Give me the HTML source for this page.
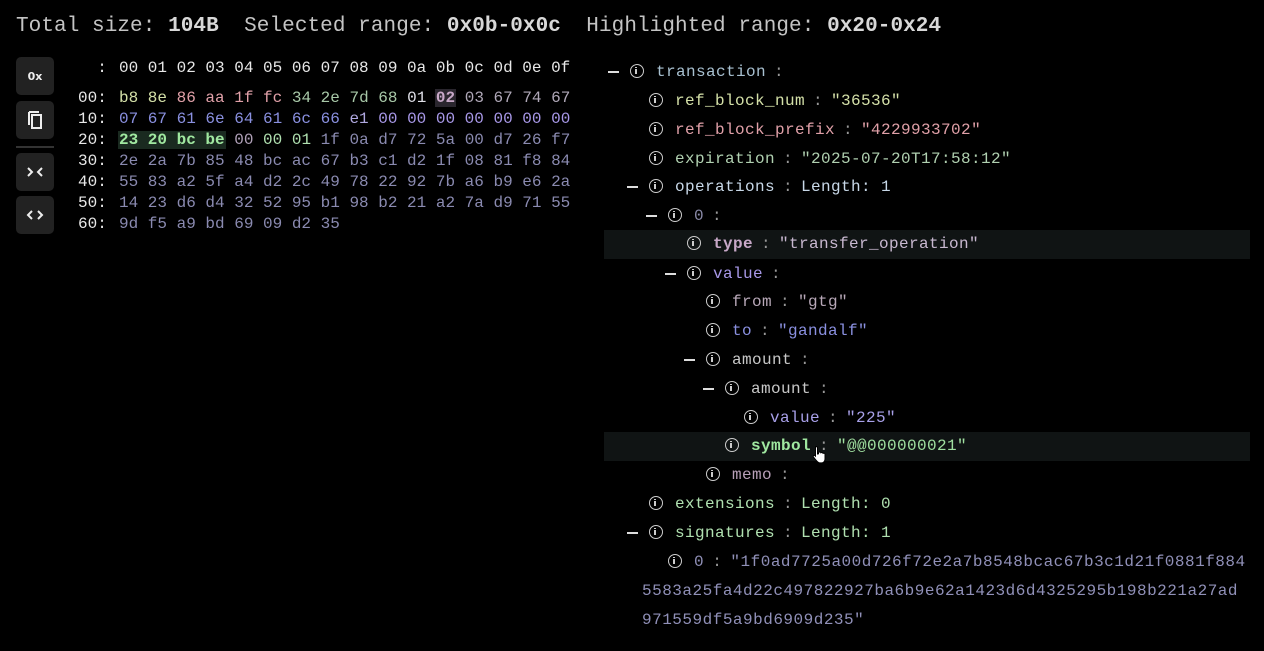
<!DOCTYPE html>
<html><head><meta charset="utf-8"><style>
body{margin:0;background:#000;width:1264px;height:651px;overflow:hidden;font-family:"Liberation Mono",monospace;position:relative}
.hdr{position:absolute;left:16px;top:15px;font-size:21px;letter-spacing:0.07px;color:#c4c4c4;white-space:pre}
.hdr b{color:#d8d8d8}
.btn{position:absolute;left:16px;width:38px;height:38px;background:#222;border-radius:5px;color:#eee;display:flex;align-items:center;justify-content:center}
.sep{position:absolute;left:16px;width:38px;top:146px;height:2px;background:#333}
.hex{position:absolute;left:78px;font-size:16px;white-space:pre;color:#e8e8e8;line-height:21px}
.hex .p{display:inline-block;width:41px;font-style:normal}
.hex span{padding:0 1px;margin:0 -1px}
.row{position:absolute;font-size:16px;letter-spacing:0.4px;white-space:pre;height:29px;line-height:29px;margin-top:1px}
.hl{position:absolute;left:604px;width:646px;height:29px;background:#101414}
.i{display:inline-block;width:14px;height:14px;border:1.6px solid #ccc;border-radius:50%;box-sizing:border-box;vertical-align:-2px;position:relative;margin-right:12px}
.i:after{content:"";position:absolute;left:4.2px;top:4px;width:2px;height:5px;background:#ccc}
.i:before{content:"";position:absolute;left:4.2px;top:1.5px;width:2px;height:1.6px;background:#ccc}
.m{position:absolute;width:11px;height:2px;background:#ddd}
.c{color:#999;margin:0 -2px}
.sig{color:#9090b8;letter-spacing:0.5px}
</style></head><body>
<div class="hdr">Total size: <b>104B</b>  Selected range: <b>0x0b-0x0c</b>  Highlighted range: <b>0x20-0x24</b></div>

<div class="btn" style="top:57px;font-size:11px;font-weight:bold;font-family:'DejaVu Sans',sans-serif">0x</div>
<div class="btn" style="top:101px"><svg width="20" height="22" viewBox="0 0 20 22"><path d="M4 3v13" stroke="#eee" stroke-width="2" fill="none"/><path d="M4 3h10" stroke="#eee" stroke-width="2"/><rect x="7" y="6" width="9" height="13" stroke="#eee" stroke-width="2" fill="none"/></svg></div>
<div class="sep"></div>
<div class="btn" style="top:153px"><svg width="18" height="12"><path d="M2 2l4 4-4 4M16 2l-4 4 4 4" stroke="#eee" stroke-width="2" fill="none"/></svg></div>
<div class="btn" style="top:196px"><svg width="18" height="12"><path d="M6 2L2 6l4 4M12 2l4 4-4 4" stroke="#eee" stroke-width="2" fill="none"/></svg></div>

<div class="hex" style="top:58px"><i class="p">  :</i>00 01 02 03 04 05 06 07 08 09 0a 0b 0c 0d 0e 0f</div>
<div class="hex" style="top:88px"><i class="p">00:</i><span style="color:#d4e0a8">b8 8e</span> <span style="color:#e0a0a8">86 aa 1f fc</span> <span style="color:#a8c8a8">34 2e 7d 68</span> <span style="color:#e0e0e8">01</span> <span style="color:#c8a8c8;font-weight:bold;background:#2a262e">02</span> <span style="color:#b0a8b8">03 67 74 67</span>
<i class="p">10:</i><span style="color:#8a90e0">07 67 61 6e 64 61 6c 66</span> <span style="color:#b0a8e0">e1</span> <span style="color:#a898e8">00 00 00 00 00 00 00</span>
<i class="p">20:</i><span style="color:#a0e8a0;font-weight:bold;background:#1a2a20">23 20 bc be</span> <span style="color:#b0a0b8">00</span> <span style="color:#b0e0b0">00 01</span> <span style="color:#8a8ab0">1f 0a d7 72 5a 00 d7 26 f7</span>
<i class="p">30:</i><span style="color:#8a8ab0">2e 2a 7b 85 48 bc ac 67 b3 c1 d2 1f 08 81 f8 84</span>
<i class="p">40:</i><span style="color:#8a8ab0">55 83 a2 5f a4 d2 2c 49 78 22 92 7b a6 b9 e6 2a</span>
<i class="p">50:</i><span style="color:#8a8ab0">14 23 d6 d4 32 52 95 b1 98 b2 21 a2 7a d9 71 55</span>
<i class="p">60:</i><span style="color:#8a8ab0">9d f5 a9 bd 69 09 d2 35</span></div>

<div class="hl" style="top:230px"></div>
<div class="hl" style="top:432px"></div>

<div class="m" style="left:608px;top:71px"></div>
<div class="row" style="left:630px;top:57px"><i class="i"></i><span style="color:#a8c0d0">transaction</span><span class="c"> :</span></div>
<div class="row" style="left:649px;top:86px"><i class="i"></i><span style="color:#d4e0a8">ref_block_num</span><span class="c"> : </span><span style="color:#d4e0a8">"36536"</span></div>
<div class="row" style="left:649px;top:115px"><i class="i"></i><span style="color:#e0a0a8">ref_block_prefix</span><span class="c"> : </span><span style="color:#e0a0a8">"4229933702"</span></div>
<div class="row" style="left:649px;top:144px"><i class="i"></i><span style="color:#b0d0b0">expiration</span><span class="c"> : </span><span style="color:#b0d0b0">"2025-07-20T17:58:12"</span></div>
<div class="m" style="left:627px;top:186px"></div>
<div class="row" style="left:649px;top:172px"><i class="i"></i><span style="color:#c8d8e8">operations</span><span class="c"> : </span><span style="color:#c8d8e8">Length: 1</span></div>
<div class="m" style="left:646px;top:215px"></div>
<div class="row" style="left:668px;top:201px"><i class="i"></i><span style="color:#8a8aa8">0</span><span class="c"> :</span></div>
<div class="row" style="left:687px;top:229px"><i class="i"></i><b style="color:#c8a8c8">type</b><span class="c"> : </span><span style="color:#c8b8d0">"transfer_operation"</span></div>
<div class="m" style="left:665px;top:273px"></div>
<div class="row" style="left:687px;top:259px"><i class="i"></i><span style="color:#a898e8">value</span><span class="c"> :</span></div>
<div class="row" style="left:706px;top:287px"><i class="i"></i><span style="color:#b8a8b8">from</span><span class="c"> : </span><span style="color:#b8a8b8">"gtg"</span></div>
<div class="row" style="left:706px;top:316px"><i class="i"></i><span style="color:#8a90e0">to</span><span class="c"> : </span><span style="color:#8a90e0">"gandalf"</span></div>
<div class="m" style="left:684px;top:359px"></div>
<div class="row" style="left:706px;top:345px"><i class="i"></i><span style="color:#c8c8c8">amount</span><span class="c"> :</span></div>
<div class="m" style="left:703px;top:388px"></div>
<div class="row" style="left:725px;top:374px"><i class="i"></i><span style="color:#c8c8c8">amount</span><span class="c"> :</span></div>
<div class="row" style="left:744px;top:403px"><i class="i"></i><span style="color:#a8a0e8">value</span><span class="c"> : </span><span style="color:#a8a0e8">"225"</span></div>
<div class="row" style="left:725px;top:431px"><i class="i"></i><b style="color:#a0e8a0">symbol</b><span class="c"> : </span><span style="color:#a0e0a0">"@@000000021"</span></div>
<div class="row" style="left:706px;top:460px"><i class="i"></i><span style="color:#b8a0b8">memo</span><span class="c"> :</span></div>
<div class="row" style="left:649px;top:489px"><i class="i"></i><span style="color:#b0e0b0">extensions</span><span class="c"> : </span><span style="color:#b0e0b0">Length: 0</span></div>
<div class="m" style="left:627px;top:532px"></div>
<div class="row" style="left:649px;top:518px"><i class="i"></i><span style="color:#b0e0b0">signatures</span><span class="c"> : </span><span style="color:#b0e0b0">Length: 1</span></div>
<div class="row sig" style="left:668px;top:547px"><i class="i"></i>0<span class="c"> : </span>"1f0ad7725a00d726f72e2a7b8548bcac67b3c1d21f0881f884</div>
<div class="row sig" style="left:642px;top:576px">5583a25fa4d22c497822927ba6b9e62a1423d6d4325295b198b221a27ad</div>
<div class="row sig" style="left:642px;top:605px">971559df5a9bd6909d235"</div>
<svg style="position:absolute;left:812px;top:445px" width="16" height="20" viewBox="0 0 16 20"><path d="M4 1.5c1 0 1.5.6 1.5 1.5v6l1-.2V7.5c1-.8 2-.5 2.3.3.9-.6 2-.3 2.2.6 1-.5 2 0 2 1v4.5c0 2-1.3 3.6-3 4H7.5C6 17.5 3 14 1.5 12c-.7-1 .2-2 1.2-1.5l.8.7V3c0-.9.4-1.5.5-1.5z" fill="#fff" stroke="#000" stroke-width="1"/></svg>
</body></html>
